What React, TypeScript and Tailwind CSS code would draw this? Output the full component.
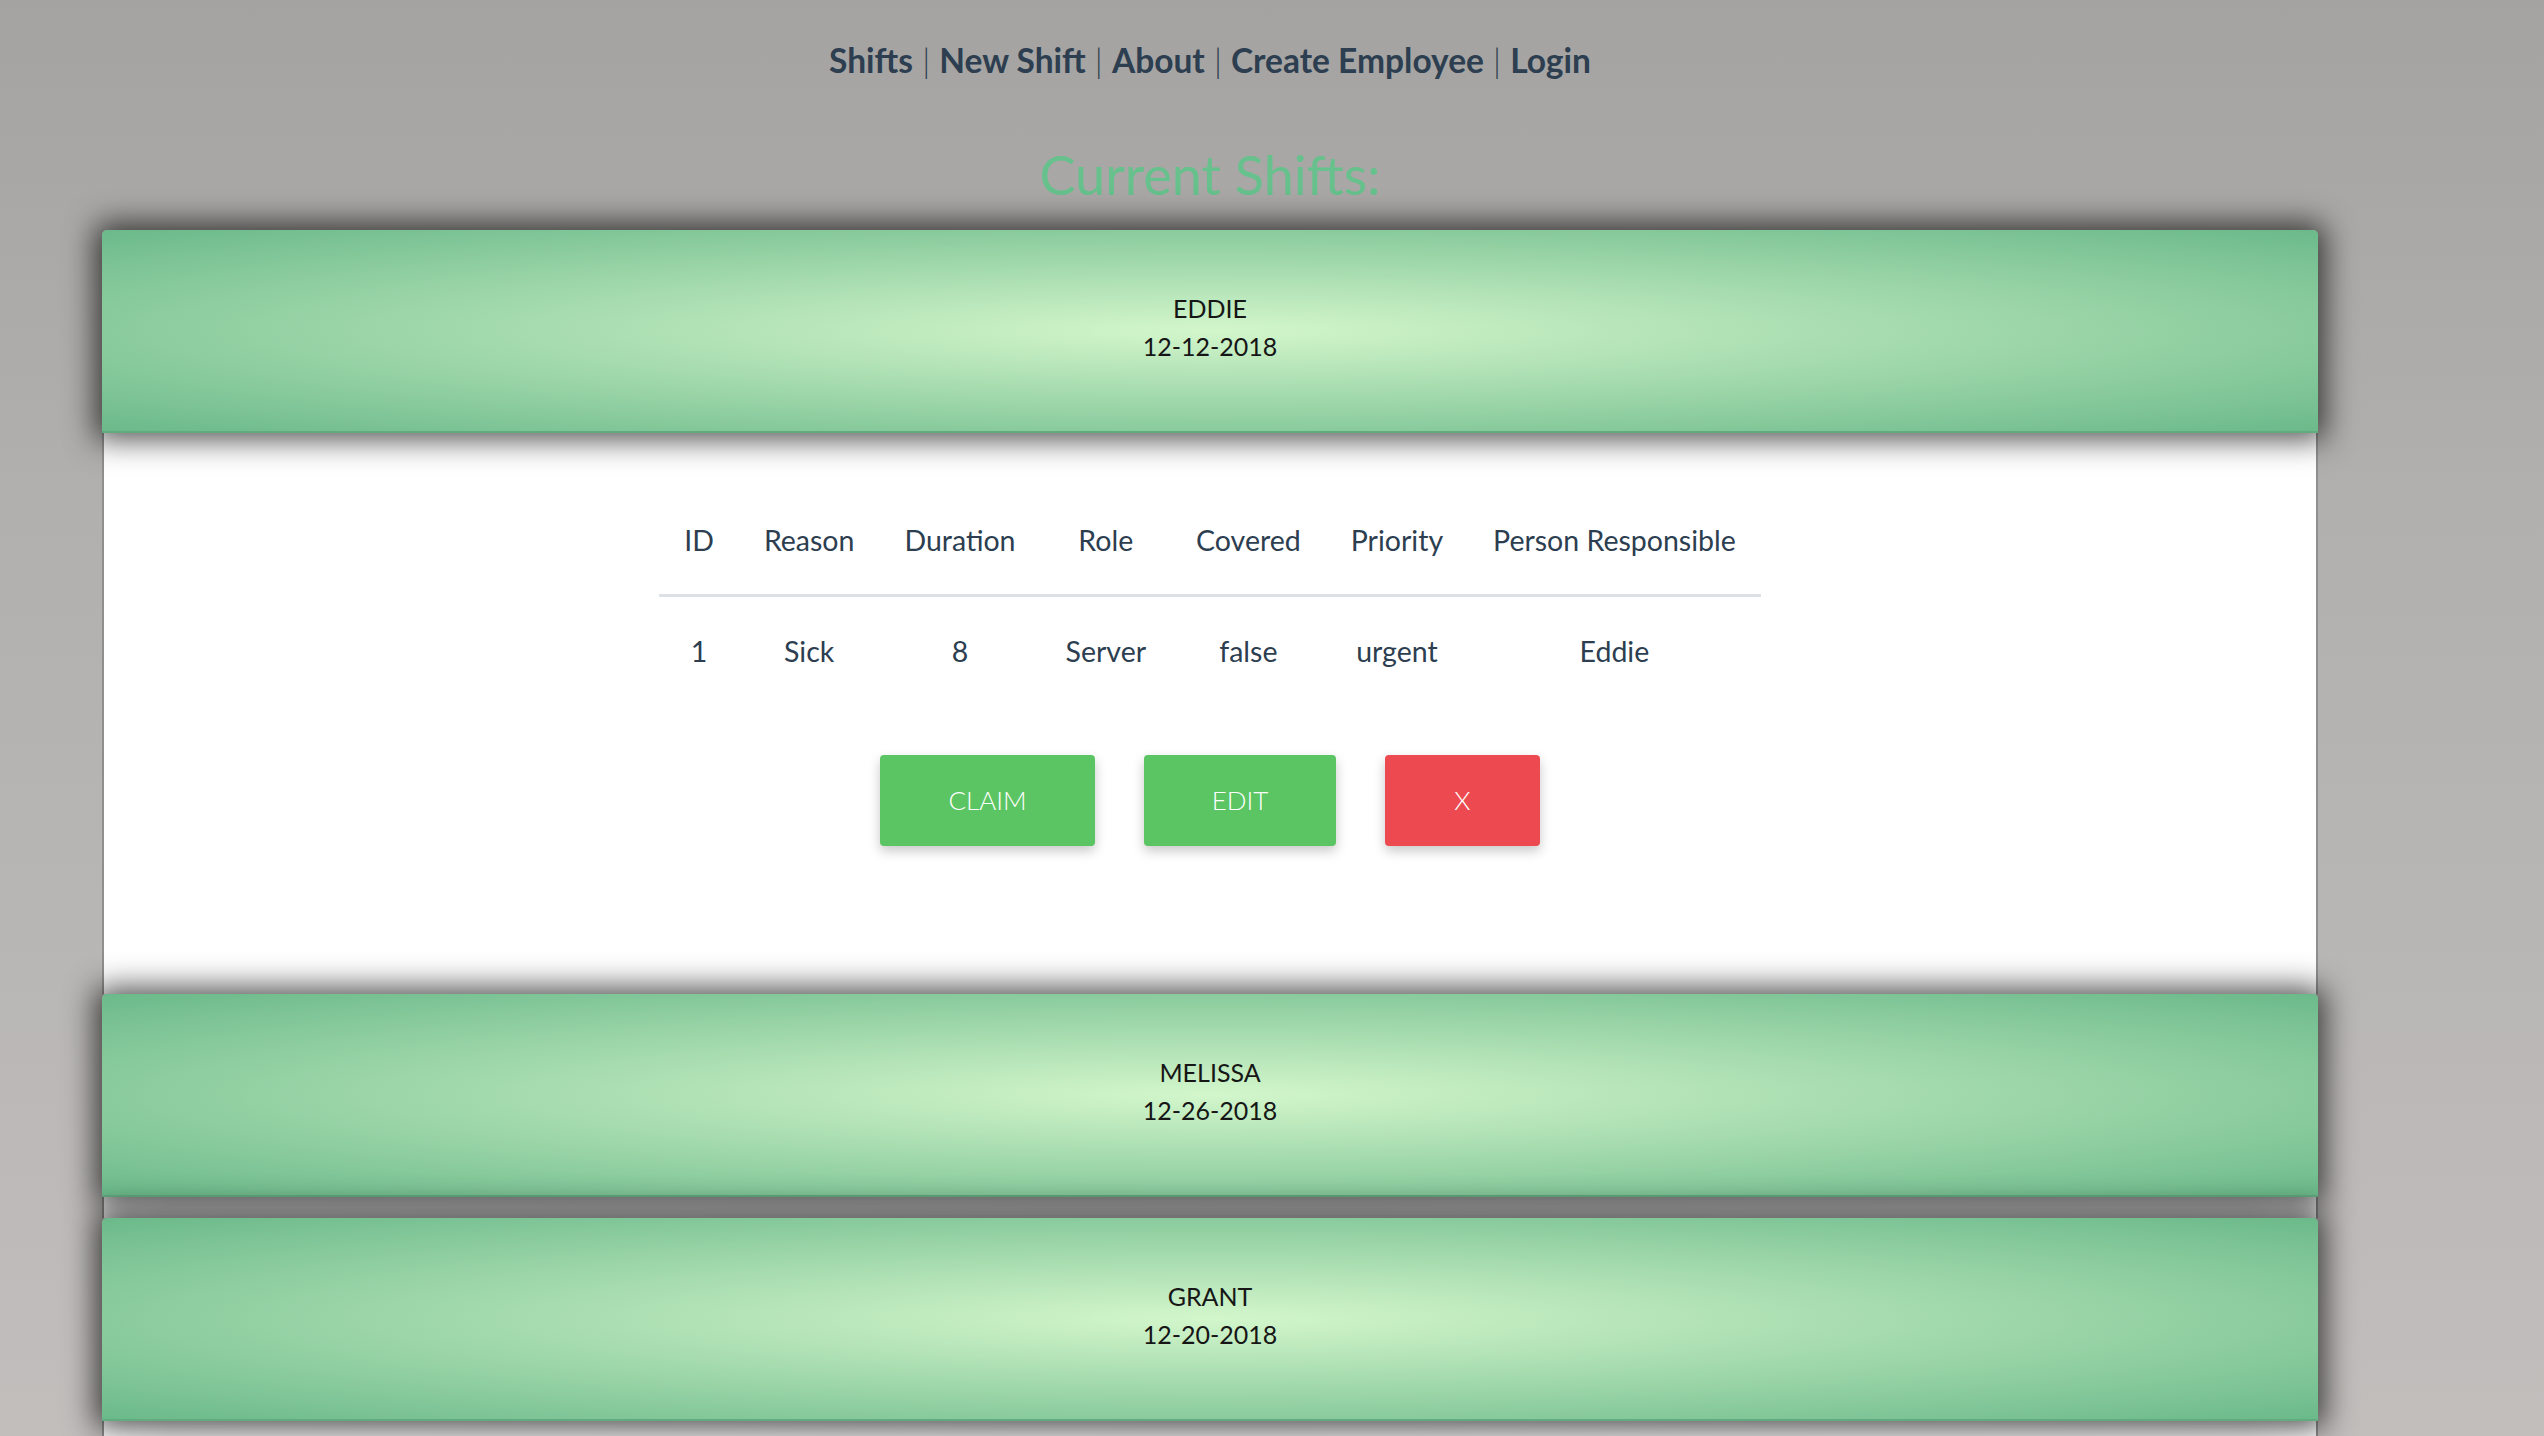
import React from "react";

type Shift = {
    name: string;
    date: string;
    open?: boolean;
};

const SHIFTS: Shift[] = [
    { name: "EDDIE", date: "12-12-2018", open: true },
    { name: "MELISSA", date: "12-26-2018" },
    { name: "GRANT", date: "12-20-2018" },
];

const COLUMNS = ["ID", "Reason", "Duration", "Role", "Covered", "Priority", "Person Responsible"];
const ROW = ["1", "Sick", "8", "Server", "false", "urgent", "Eddie"];

const NAV = ["Shifts", "New Shift", "About", "Create Employee", "Login"];

const ShiftCard = ({ shift }: { shift: Shift }) => (
    <div>
        {/* green header bar */}
        <div className="relative z-10 flex h-[203px] flex-col items-center justify-center rounded-t-[5px] border-b-2 border-[#62ab7e] bg-[radial-gradient(ellipse_at_center,#d3f6cb_0%,#6bb98a_100%)] pb-[7px] text-[25px] leading-[38px] text-[#161616] shadow-[0_0_30px_7px_rgba(0,0,0,0.68)]">
            <span>{shift.name}</span>
            <span>{shift.date}</span>
        </div>

        {shift.open ? (
            <div className="flex flex-col items-center border-x-2 border-[#8f8f8f] bg-white pt-[53px] pb-[148px]">
                <table className="border-collapse text-[28.5px] text-[#2c3e50]">
                    <thead>
                        <tr className="border-b-[3px] border-[#dde0e4]">
                            {COLUMNS.map((c) => (
                                <th key={c} className="px-[25px] py-[37px] font-normal leading-[34px]">
                                    {c}
                                </th>
                            ))}
                        </tr>
                    </thead>
                    <tbody>
                        <tr>
                            {ROW.map((v, i) => (
                                <td key={i} className="px-[25px] py-[37px] text-center leading-[34px]">
                                    {v}
                                </td>
                            ))}
                        </tr>
                    </tbody>
                </table>

                <div className="mt-[50px] flex gap-[49px]">
                    <button className="h-[91px] rounded-[4px] bg-[#5cc563] px-[68px] text-[26px] font-light text-white shadow-[0_5px_12px_rgba(0,0,0,0.22)]">
                        CLAIM
                    </button>
                    <button className="h-[91px] rounded-[4px] bg-[#5cc563] px-[68px] text-[26px] font-light text-white shadow-[0_5px_12px_rgba(0,0,0,0.22)]">
                        EDIT
                    </button>
                    <button className="h-[91px] rounded-[4px] bg-[#ec4a50] px-[69px] text-[26px] font-light text-white shadow-[0_5px_12px_rgba(0,0,0,0.22)]">
                        X
                    </button>
                </div>
            </div>
        ) : (
            <div className="h-[21px] border-x-2 border-[#8f8f8f] bg-[linear-gradient(90deg,#ffffff_0%,#f2f2f2_3%,#ececec_50%,#f2f2f2_97%,#ffffff_100%)]" />
        )}
    </div>
);

export default function App() {
    return (
        <div className="min-h-screen overflow-hidden bg-[linear-gradient(180deg,#a4a3a1_0%,#b1b0ae_35%,#c1bebc_100%)] font-['Lato','Noto_Sans',sans-serif]">
            <div className="w-[2420px] px-[102px]">
                <nav className="pt-[39px] text-center text-[33.5px] leading-[42px] text-[#2c3e50]">
                    {NAV.map((item, i) => (
                        <React.Fragment key={item}>
                            {i > 0 && <span className="font-light"> | </span>}
                            <a className="font-bold">{item}</a>
                        </React.Fragment>
                    ))}
                </nav>

                <h1 className="mt-[62px] mb-[23px] text-center text-[54px] font-normal leading-[64px] text-[#66c18c]">
                    Current Shifts:
                </h1>

                <div className="flex flex-col">
                    {SHIFTS.map((s) => (
                        <ShiftCard key={s.name} shift={s} />
                    ))}
                </div>
            </div>
        </div>
    );
}
